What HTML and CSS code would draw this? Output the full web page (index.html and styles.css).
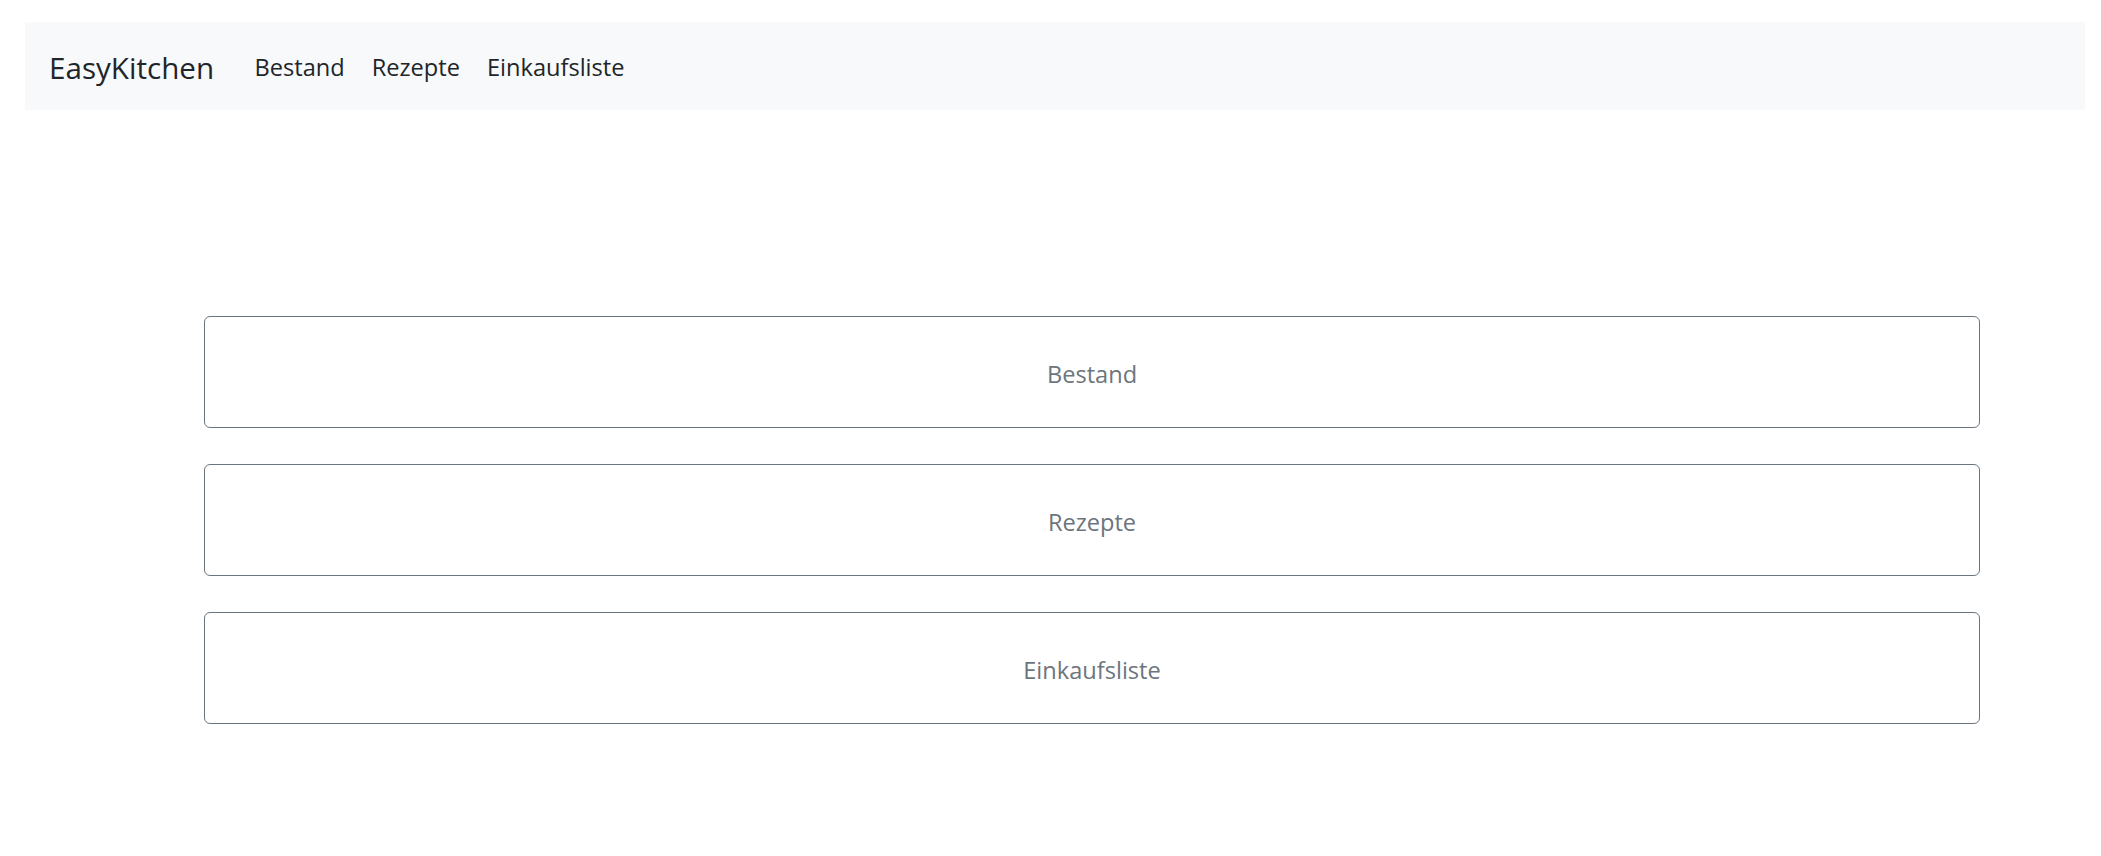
FILE: index.html
```html
<!DOCTYPE html>
<html lang="de">
<head>
<meta charset="utf-8">
<title>EasyKitchen</title>
<link rel="stylesheet" href="styles.css">
</head>
<body>
<div class="page">
  <nav class="navbar">
    <a class="brand" href="#">EasyKitchen</a>
    <ul class="nav-links">
      <li><a href="#">Bestand</a></li>
      <li><a href="#">Rezepte</a></li>
      <li><a href="#">Einkaufsliste</a></li>
    </ul>
  </nav>
  <main class="menu">
    <a class="menu-btn" href="#">Bestand</a>
    <a class="menu-btn" href="#">Rezepte</a>
    <a class="menu-btn" href="#">Einkaufsliste</a>
  </main>
</div>
</body>
</html>
```
FILE: styles.css
```css
html, body {
  margin: 0;
  padding: 0;
  background: #ffffff;
}
body {
  font-family: "Open Sans", "Noto Sans", sans-serif;
  color: #212529;
}
.page {
  padding: 22px 16px 0 25px;
}
.navbar {
  display: flex;
  align-items: center;
  height: 88px;
  background: #f8f9fa;
  padding-left: 24px;
}
.brand {
  font-size: 29.6px;
  color: #212529;
  text-decoration: none;
  margin-right: 27px;
  line-height: 1;
  padding-top: 3px;
}
.nav-links {
  display: flex;
  list-style: none;
  margin: 0;
  padding: 0;
}
.nav-links a {
  display: block;
  padding: 3px 13.5px 0;
  font-size: 23.6px;
  color: #212529;
  text-decoration: none;
  line-height: 1;
}
.menu {
  display: flex;
  flex-direction: column;
  gap: 36px;
  margin: 206px 0 0 179px;
  width: 1776px;
}
.menu-btn {
  display: flex;
  align-items: center;
  justify-content: center;
  box-sizing: border-box;
  height: 112px;
  border: 1px solid #6c757d;
  border-radius: 6px;
  color: #6c757d;
  font-size: 23.6px;
  text-decoration: none;
  padding-top: 4px;
}
```
